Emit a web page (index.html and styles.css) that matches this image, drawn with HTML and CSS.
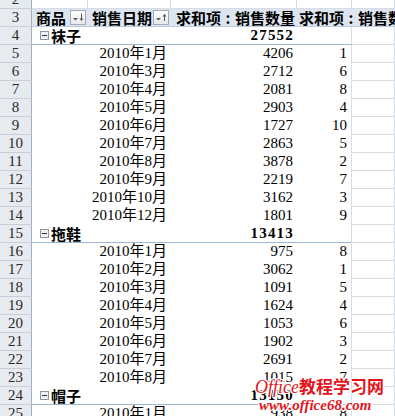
FILE: index.html
```html
<!DOCTYPE html>
<html lang="zh-CN">
<head>
<meta charset="utf-8">
<title>数据透视表</title>
<link rel="stylesheet" href="styles.css">
</head>
<body>
<div class="sheet">
  <div class="row">
    <div class="rh">2</div><div class="g"></div><div class="g"></div><div class="g"></div><div class="g"></div><div class="g"></div>
  </div>
  <div class="row hdr">
    <div class="rh">3</div>
    <div class="h hf"><span>商品</span>
      <svg class="fb" width="16" height="15" viewBox="0 0 16 15"><defs><linearGradient id="bg1" x1="0" y1="0" x2="0" y2="1"><stop offset="0" stop-color="#ffffff"/><stop offset="1" stop-color="#e4e7ec"/></linearGradient></defs><rect x="0.5" y="0.5" width="15" height="14" fill="url(#bg1)" stroke="#a3aab5"/><path d="M3 8h5l-2.5 2.5z" fill="#555"/><path d="M11.5 3.5v6.5" stroke="#555" stroke-width="1"/><path d="M9.5 8.5l2 2.5 2-2.5z" fill="#555"/></svg>
    </div>
    <div class="h hf"><span>销售日期</span>
      <svg class="fb" width="16" height="15" viewBox="0 0 16 15"><rect x="0.5" y="0.5" width="15" height="14" fill="url(#bg1)" stroke="#a3aab5"/><path d="M3 8h5l-2.5 2.5z" fill="#555"/><path d="M11.5 4.5v6.5" stroke="#555" stroke-width="1"/><path d="M9.5 6.5l2-2.5 2 2.5z" fill="#555"/></svg>
    </div>
    <div class="h ht">求和项<span class="colon">:</span>销售数量</div>
    <div class="h ht wide">求和项<span class="colon">:</span>销售数量</div>
  </div>

  <div class="row cat">
    <div class="rh">4</div>
    <div class="p cl span2"><svg class="tog" width="9" height="9" viewBox="0 0 9 9"><rect x="0.5" y="0.5" width="8" height="8" fill="#eef0f3" stroke="#8d97a5"/><path d="M2 4.5h5" stroke="#333"/></svg><b>袜子</b></div>
    <div class="p n tot">27552</div><div class="p d"></div><div class="g"></div>
  </div>
  <div class="row"><div class="rh">5</div><div class="p"></div><div class="p n">2010年1月</div><div class="p n">4206</div><div class="p n d">1</div><div class="g"></div></div>
  <div class="row"><div class="rh">6</div><div class="p"></div><div class="p n">2010年3月</div><div class="p n">2712</div><div class="p n d">6</div><div class="g"></div></div>
  <div class="row"><div class="rh">7</div><div class="p"></div><div class="p n">2010年4月</div><div class="p n">2081</div><div class="p n d">8</div><div class="g"></div></div>
  <div class="row"><div class="rh">8</div><div class="p"></div><div class="p n">2010年5月</div><div class="p n">2903</div><div class="p n d">4</div><div class="g"></div></div>
  <div class="row"><div class="rh">9</div><div class="p"></div><div class="p n">2010年6月</div><div class="p n">1727</div><div class="p n d">10</div><div class="g"></div></div>
  <div class="row"><div class="rh">10</div><div class="p"></div><div class="p n">2010年7月</div><div class="p n">2863</div><div class="p n d">5</div><div class="g"></div></div>
  <div class="row"><div class="rh">11</div><div class="p"></div><div class="p n">2010年8月</div><div class="p n">3878</div><div class="p n d">2</div><div class="g"></div></div>
  <div class="row"><div class="rh">12</div><div class="p"></div><div class="p n">2010年9月</div><div class="p n">2219</div><div class="p n d">7</div><div class="g"></div></div>
  <div class="row"><div class="rh">13</div><div class="p"></div><div class="p n">2010年10月</div><div class="p n">3162</div><div class="p n d">3</div><div class="g"></div></div>
  <div class="row"><div class="rh">14</div><div class="p"></div><div class="p n">2010年12月</div><div class="p n">1801</div><div class="p n d">9</div><div class="g"></div></div>

  <div class="row cat">
    <div class="rh">15</div>
    <div class="p cl span2"><svg class="tog" width="9" height="9" viewBox="0 0 9 9"><rect x="0.5" y="0.5" width="8" height="8" fill="#eef0f3" stroke="#8d97a5"/><path d="M2 4.5h5" stroke="#333"/></svg><b>拖鞋</b></div>
    <div class="p n tot">13413</div><div class="p d"></div><div class="g"></div>
  </div>
  <div class="row"><div class="rh">16</div><div class="p"></div><div class="p n">2010年1月</div><div class="p n">975</div><div class="p n d">8</div><div class="g"></div></div>
  <div class="row"><div class="rh">17</div><div class="p"></div><div class="p n">2010年2月</div><div class="p n">3062</div><div class="p n d">1</div><div class="g"></div></div>
  <div class="row"><div class="rh">18</div><div class="p"></div><div class="p n">2010年3月</div><div class="p n">1091</div><div class="p n d">5</div><div class="g"></div></div>
  <div class="row"><div class="rh">19</div><div class="p"></div><div class="p n">2010年4月</div><div class="p n">1624</div><div class="p n d">4</div><div class="g"></div></div>
  <div class="row"><div class="rh">20</div><div class="p"></div><div class="p n">2010年5月</div><div class="p n">1053</div><div class="p n d">6</div><div class="g"></div></div>
  <div class="row"><div class="rh">21</div><div class="p"></div><div class="p n">2010年6月</div><div class="p n">1902</div><div class="p n d">3</div><div class="g"></div></div>
  <div class="row"><div class="rh">22</div><div class="p"></div><div class="p n">2010年7月</div><div class="p n">2691</div><div class="p n d">2</div><div class="g"></div></div>
  <div class="row"><div class="rh">23</div><div class="p"></div><div class="p n">2010年8月</div><div class="p n">1015</div><div class="p n d">7</div><div class="g"></div></div>

  <div class="row cat">
    <div class="rh">24</div>
    <div class="p cl span2"><svg class="tog" width="9" height="9" viewBox="0 0 9 9"><rect x="0.5" y="0.5" width="8" height="8" fill="#eef0f3" stroke="#8d97a5"/><path d="M2 4.5h5" stroke="#333"/></svg><b>帽子</b></div>
    <div class="p n tot">13150</div><div class="p d"></div><div class="g"></div>
  </div>
  <div class="row"><div class="rh">25</div><div class="p"></div><div class="p n">2010年1月</div><div class="p n">938</div><div class="p n d">8</div><div class="g"></div></div>
</div>

<div class="wm">
  <div class="wm1"><span class="off">Office</span>教程学习网</div>
  <div class="wm2">www.office68.com</div>
</div>
</body>
</html>
```

FILE: styles.css
```css
html, body {
  margin: 0;
  padding: 0;
}

body {
  width: 395px;
  height: 416px;
  overflow: hidden;
  position: relative;
  background: #ffffff;
  font-family: "Liberation Serif", "Noto Sans CJK SC", serif;
  font-size: 15px;
  color: #000;
}

.sheet {
  margin-top: -9px;
}

.row {
  display: grid;
  grid-template-columns: 32px 56px 83px 126px 55px 1fr;
  height: 18px;
}

.row > div {
  box-sizing: border-box;
  height: 18px;
  line-height: 17px;
  white-space: nowrap;
}

.rh {
  background: #e7eaef;
  border-right: 1px solid #9fb0c4;
  border-bottom: 1px solid #c9cfd8;
  text-align: center;
  color: #2a2a2a;
}

.g {
  border-right: 1px solid #d8dde5;
  border-bottom: 1px solid #d8dde5;
}

.p {
  background: #fff;
}

.n {
  text-align: right;
  padding-right: 4px;
}

.d {
  border-right: 1px solid #d8dde5;
}

/* header row */
.hdr .h {
  background: #dde6f0;
  border-bottom: 1px solid #b9cbe0;
  font-family: "Noto Sans CJK SC", sans-serif;
  font-weight: 700;
}

.hf {
  display: flex;
  align-items: center;
  justify-content: space-between;
  padding-left: 4px;
  padding-right: 2px;
}

.fb {
  display: block;
  flex: none;
}

.ht {
  padding-left: 5px;
}

.wide {
  grid-column: span 2;
  padding-left: 2px;
}

.colon {
  display: inline-block;
  width: 14px;
  text-align: center;
}

/* category rows */
.cat .p {
  border-bottom: 1px solid #9db7d6;
}

.span2 {
  grid-column: span 2;
}

.cl {
  display: flex;
  align-items: center;
  padding-left: 8px;
  gap: 2px;
}

.cl b {
  font-family: "Noto Sans CJK SC", sans-serif;
  font-weight: 700;
}

.tog {
  display: block;
  flex: none;
}

.tot {
  font-weight: 700;
  letter-spacing: 1.2px;
  padding-right: 3px;
}

/* watermark */
.wm {
  position: absolute;
  left: 255px;
  top: 376px;
  color: #e3141b;
  text-shadow: 1px 0 #fff, -1px 0 #fff, 0 1px #fff, 0 -1px #fff,
    1px 1px #fff, -1px -1px #fff, 1px -1px #fff, -1px 1px #fff;
}

.wm1 {
  font-family: "Noto Sans CJK SC", sans-serif;
  font-weight: 700;
  font-size: 17px;
  line-height: 20px;
  white-space: nowrap;
}

.off {
  font-family: "Liberation Serif", serif;
  font-style: italic;
  font-weight: 400;
  font-size: 18px;
}

.wm2 {
  font-family: "Liberation Serif", serif;
  font-style: italic;
  font-weight: 700;
  font-size: 15px;
  line-height: 16px;
  margin-left: 4px;
  white-space: nowrap;
}
```
